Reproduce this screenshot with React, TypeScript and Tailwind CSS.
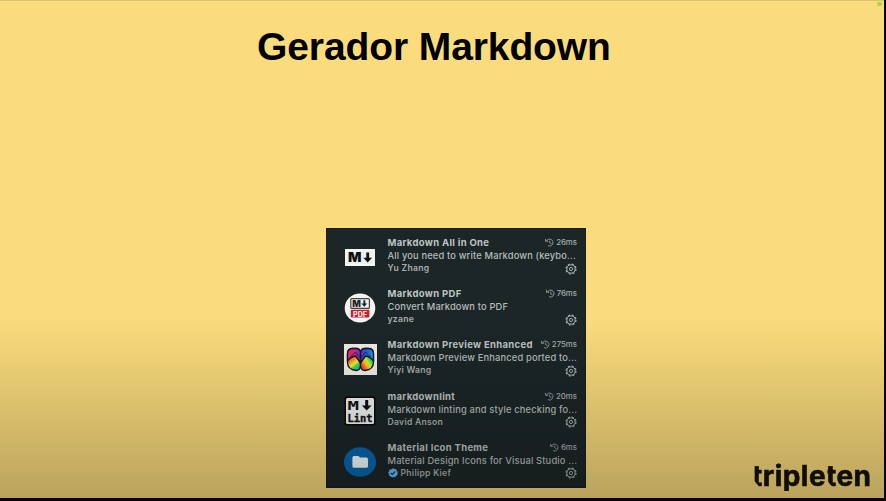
import type { ReactNode } from 'react';

function MarkdownIcon() {
  return (
    <svg width="30" height="17" viewBox="0 0 30 17">
      <rect width="30" height="17" fill="#eef0f0" />
      <rect x="1.2" y="1.2" width="27.6" height="14.6" fill="none" stroke="#fff" strokeWidth=".8" />
      <text x="3" y="13.2" textLength="13.5" lengthAdjust="spacingAndGlyphs" fontFamily="Inter, sans-serif" fontWeight="900" fontSize="13" fill="#111">M</text>
      <path d="M21.3 3.5h2.8v5.2h3l-4.400 4.900-4.400-4.900h3z" fill="#111" />
    </svg>
  );
}

function PdfIcon() {
  return (
    <svg width="32" height="30" viewBox="0 0 32 30">
      <ellipse cx="16" cy="15" rx="15.3" ry="14.5" fill="#f4f4f2" />
      <rect x="6.800" y="5.600" width="18.600" height="9.800" rx="1" fill="#eef0ee" stroke="#3c4644" strokeWidth="1.200" />
      <text x="8.300" y="13.600" textLength="8.600" lengthAdjust="spacingAndGlyphs" fontFamily="Inter, sans-serif" fontWeight="900" fontSize="8.300" fill="#222">M</text>
      <path d="M19.400 7.300h1.900v3.200h2l-3 3.300-3-3.300h2.100z" fill="#222" />
      <rect x="6.800" y="16.800" width="18.600" height="7.800" rx=".8" fill="#c9222c" />
      <text x="9" y="23.500" textLength="14" lengthAdjust="spacingAndGlyphs" fontFamily="Inter, sans-serif" fontWeight="800" fontSize="7.400" fill="#f6dede">PDF</text>
    </svg>
  );
}

function PreviewIcon() {
  return (
    <svg width="33" height="31" viewBox="0 0 33 31">
      <defs>
        <linearGradient id="leftSole" gradientUnits="userSpaceOnUse" x1="6" y1="14" x2="14" y2="25">
          <stop offset="0" stopColor="#ff4a2a" />
          <stop offset=".28" stopColor="#ff9a1d" />
          <stop offset=".5" stopColor="#fbf22a" />
          <stop offset=".75" stopColor="#3fdc4a" />
          <stop offset="1" stopColor="#13b3c8" />
        </linearGradient>
        <linearGradient id="rightSole" gradientUnits="userSpaceOnUse" x1="18" y1="21" x2="28" y2="14">
          <stop offset="0" stopColor="#ff4d24" />
          <stop offset=".3" stopColor="#ffc524" />
          <stop offset=".55" stopColor="#c8ee2c" />
          <stop offset=".8" stopColor="#2cd865" />
          <stop offset="1" stopColor="#18a3d8" />
        </linearGradient>
        <linearGradient id="leftStrap" x1="0" x2="1">
          <stop offset="0" stopColor="#f02a5a" />
          <stop offset=".55" stopColor="#cf2890" />
          <stop offset="1" stopColor="#7438c0" />
        </linearGradient>
        <linearGradient id="rightStrap" x1="0" x2="1">
          <stop offset="0" stopColor="#5a32c0" />
          <stop offset=".5" stopColor="#2862e0" />
          <stop offset="1" stopColor="#169ad0" />
        </linearGradient>
      </defs>
      <rect width="33" height="31" fill="#f3eee6" />
      <g stroke="#10182a" strokeWidth="1.3" strokeLinejoin="round">
        <path d="M3.500 9.500Q3.500 4.500 9 4.500h3q4.500 0 4.500 5V21q0 5.500-4.500 5.500Q3.500 25.500 3.500 18.500z" fill="url(#leftSole)" />
        <path d="M29.500 9.500q0-5-5.500-5h-3q-4.500 0-4.500 5V21q0 5.500 4.500 5.500 8.500-1 8.500-8z" fill="url(#rightSole)" />
        <path d="M3.500 17v-7.500q0-5 5.500-5h3q4.500 0 4.500 5V19L11.500 12Q7 12.500 3.500 17z" fill="url(#leftStrap)" />
        <path d="M29.500 17v-7.500q0-5-5.500-5h-3q-4.500 0-4.500 5V19l5-7q4.500.5 8 5z" fill="url(#rightStrap)" />
      </g>
      <path d="M7 12.500 11.500 8l5 6.500M26 12.500 21.500 8l-5 6.500" fill="none" stroke="#17203a" strokeWidth=".9" />
    </svg>
  );
}

function LintIcon() {
  return (
    <svg width="32" height="30" viewBox="0 0 32 30">
      <rect x=".5" y=".5" width="31" height="29" rx="2.500" fill="#080a0a" />
      <rect x="2" y="2" width="28" height="26" rx="1.500" fill="#f2f5f3" />
      <g transform="translate(3.600 13.800) scale(1 1.350)">
        <text textLength="11.500" lengthAdjust="spacingAndGlyphs" fontFamily="'DejaVu Sans Mono', monospace" fontWeight="700" fontSize="9" fill="#111">M</text>
      </g>
      <path d="M21.200 4h3v5.500h3.400l-4.900 5-4.900-5h3.400z" fill="#111" />
      <g transform="translate(3.400 26) scale(1 1.250)">
        <text textLength="25" lengthAdjust="spacingAndGlyphs" fontFamily="'DejaVu Sans Mono', monospace" fontWeight="700" fontSize="8.800" fill="#111" stroke="#111" strokeWidth=".3">Lint</text>
      </g>
    </svg>
  );
}

function FolderIcon() {
  return (
    <svg width="32" height="30" viewBox="0 0 32 30">
      <ellipse cx="16" cy="15" rx="16" ry="14.800" fill="#0868b0" />
      <path d="M8.400 10.500q0-1.600 1.600-1.600h4.300l1.800 1.700h6.300q1.600 0 1.600 1.600v7q0 1.600-1.600 1.600H10q-1.600 0-1.600-1.600z" fill="#f8ffff" />
    </svg>
  );
}

function History() {
  return (
    <svg width="9" height="9" viewBox="0 0 9 9" fill="none" stroke="#a0a6a6" strokeWidth=".85">
      <path d="M1.400 3A3.500 3.500 0 1 1 3 7.700M.6.800v2.500h2.500M4.700 2.600v2.200l1.800 1" />
    </svg>
  );
}

function Gear() {
  return (
    <svg className="shrink-0" width="12" height="12" viewBox="0 0 12 12" fill="none" stroke="#a6adad">
      <circle cx="6" cy="6" r="5" strokeWidth="1.200" strokeDasharray="2.200 1.727" />
      <circle cx="6" cy="6" r="4.100" strokeWidth="1" />
      <circle cx="6" cy="6" r="1.600" strokeWidth="1" />
    </svg>
  );
}

function Verified() {
  return (
    <svg className="mr-[3px] shrink-0" width="10" height="10" viewBox="0 0 10 10">
      <path d="m5 .2 1.400.9 1.700.1.600 1.600 1.100 1.200L9.500 5.600l.1 1.400-1.500.8-.9 1.400-1.700-.2L4 9.500l-1.200-1.100-1.600-.6-.1-1.700L.2 4.700l.9-1.300.3-1.700 1.700-.3z" fill="#62c0fc" />
      <path d="m2.800 5 1.500 1.500 3-3.200" fill="none" stroke="#153448" strokeWidth="1.100" />
    </svg>
  );
}

function Logo() {
  return (
    <svg className="mb-[-6px] ml-[166px]" width="122" height="34" viewBox="0 0 122 34" role="img" aria-label="tripleten">
      <mask id="logoCuts">
        <rect width="122" height="34" fill="#fff" />
        <path d="M0 0h2.600v34H0zM73 5h2.400v22H73zM2 20.500l5 6H2zM75 20.500l5 6h-5zM0 31h122v3H0z" fill="#000" />
      </mask>
      <text x="0" y="25.500" textLength="119" fontFamily="Inter, sans-serif" fontWeight="700" fontSize="28" fill="#14120b" stroke="#14120b" strokeWidth=".6" mask="url(#logoCuts)">tripleten</text>
    </svg>
  );
}

type Extension = {
  name: string;
  description: string;
  author: string;
  time: string;
  icon: ReactNode;
  verified?: boolean;
};

const extensions: Extension[] = [
  { name: 'Markdown All in One', description: 'All you need to write Markdown (keybo...', author: 'Yu Zhang', time: '26ms', icon: <MarkdownIcon /> },
  { name: 'Markdown PDF', description: 'Convert Markdown to PDF', author: 'yzane', time: '76ms', icon: <PdfIcon /> },
  { name: 'Markdown Preview Enhanced', description: 'Markdown Preview Enhanced ported to...', author: 'Yiyi Wang', time: '275ms', icon: <PreviewIcon /> },
  { name: 'markdownlint', description: 'Markdown linting and style checking fo...', author: 'David Anson', time: '20ms', icon: <LintIcon /> },
  { name: 'Material Icon Theme', description: 'Material Design Icons for Visual Studio ...', author: 'Philipp Kief', time: '6ms', icon: <FolderIcon />, verified: true },
];

function ExtensionRow({ item }: { item: Extension }) {
  return (
    <li className="flex h-[51.200px] pr-[8px] pl-[16px]">
      <div className="flex h-[42px] w-[34px] shrink-0 items-center justify-center">{item.icon}</div>
      <div className="ml-[10.500px] min-w-0 flex-1 whitespace-nowrap">
        <div className="flex h-[13px] items-center justify-between">
          <h2 className="text-[9.5px] leading-[13px] font-bold tracking-[0.32px] text-[#bfc4c4]">{item.name}</h2>
          <span className="flex items-center gap-[2px] text-[7.8px] leading-[13px] font-medium text-[#a8aeae]">
            <History />
            {item.time}
          </span>
        </div>
        <p className="text-[9.3px] leading-[13px] font-[450] tracking-[0.17px] text-[#b6bcbc]">{item.description}</p>
        <div className="flex h-[13px] items-center justify-between pr-[0.5px]">
          <span className="flex items-center text-[8.6px] leading-[13px] font-semibold tracking-[0.28px] text-[#a9afaf]">
            {item.verified && <Verified />}
            {item.author}
          </span>
          <Gear />
        </div>
      </div>
    </li>
  );
}

export default function App() {
  return (
    <main className="h-[501px] w-[886px] overflow-hidden bg-[#080602] pr-[2px] pb-[3px] font-['Inter',sans-serif]">
      <div className="relative flex h-[498px] w-[884px] flex-col border-t border-[#d8c27c] bg-[#fbdc7c]">
        <h1 className="mt-[23px] ml-[257px] h-[45px] font-['Liberation_Sans',Arial,sans-serif] text-[39px] leading-[45px] font-bold tracking-[-0.1px] whitespace-nowrap text-black">
          Gerador Markdown
        </h1>
        <div className="mt-[159px] flex items-end">
          <ul className="ml-[326px] h-[259.500px] w-[260px] shrink-0 overflow-hidden border border-[#17201f] bg-[#1c2627] pt-[7px]">
            {extensions.map((item) => (
              <ExtensionRow key={item.name} item={item} />
            ))}
          </ul>
          <Logo />
        </div>
        <div className="pointer-events-none absolute inset-x-0 bottom-0 h-[180px] bg-linear-to-b from-black/0 to-black/26" />
        <span className="absolute top-[1px] right-[2px] h-[4px] w-[5px] rounded-full bg-[#9fd84b]" />
      </div>
    </main>
  );
}
